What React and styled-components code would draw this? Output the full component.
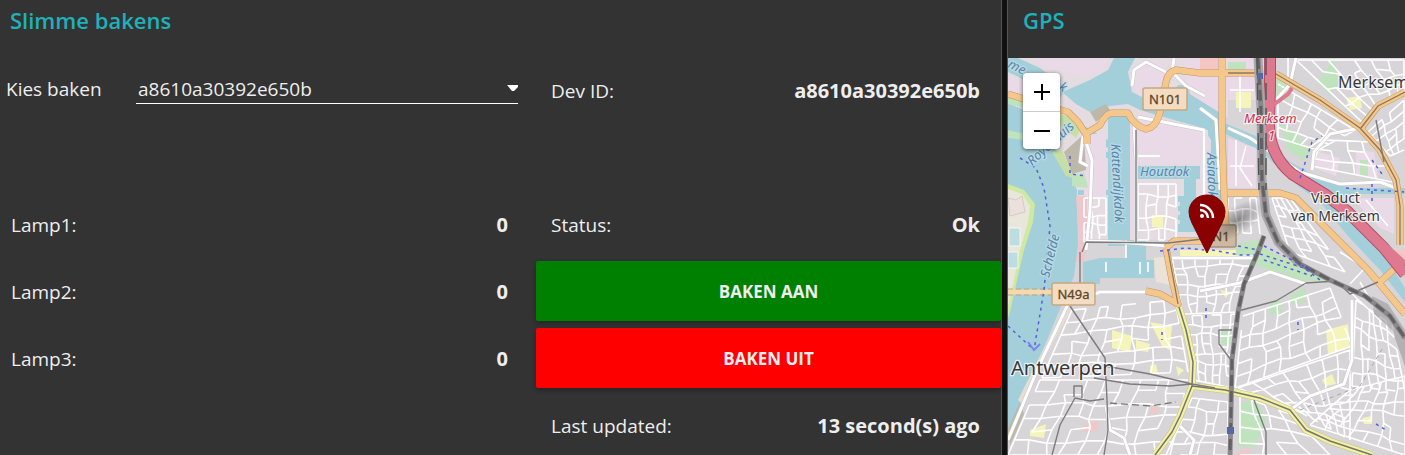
import React from 'react';
import styled, { createGlobalStyle } from 'styled-components';

const GlobalStyle = createGlobalStyle`
  * { box-sizing: border-box; }
  body {
    margin: 0;
    background: #111;
    color: #eee;
    font-family: "Open Sans", "Noto Sans", sans-serif;
    font-size: 19px;
    line-height: 28px;
  }
`;

const Dashboard = styled.main`
  display: grid;
  grid-template-columns: minmax(0, 1002fr) minmax(0, 398fr);
  column-gap: 5px;
  min-height: 100vh;
`;

const Panel = styled.section`
  display: flex;
  flex-direction: column;
  background: #333;
  border: 0 solid #555;
  border-right-width: ${(p) => (p.$side === 'right' ? '1px' : '0')};
  border-left-width: ${(p) => (p.$side === 'left' ? '1px' : '0')};
`;

const PanelTitle = styled.h2`
  margin: 0;
  height: ${(p) => p.$height};
  padding: 6px ${(p) => p.$inset} 0;
  color: #1fb1b9;
  font-size: 22px;
  font-weight: 600;
  line-height: 28px;
`;

const Columns = styled.div`
  display: grid;
  grid-template-columns: minmax(0, 529fr) minmax(0, 465fr);
  grid-auto-rows: 60px;
  gap: 7px;
`;

const Field = styled.div`
  display: flex;
  align-items: center;
  padding: 0 6px 2px;
`;

const FieldLabel = styled.label`
  flex: 0 0 130px;
`;

const SelectBox = styled.div`
  display: flex;
  flex: 1;
  align-items: center;
  margin-right: 5px;
  border-bottom: 1px solid #fff;

  svg {
    flex: none;
    width: 11px;
    margin-left: -11px;
    pointer-events: none;
  }
`;

const Select = styled.select`
  flex: 1;
  min-width: 0;
  height: 29px;
  padding: 0 12px 0 2px;
  border: 0;
  appearance: none;
  background: transparent;
  color: inherit;
  font: inherit;
`;

const Reading = styled.div`
  display: flex;
  align-items: center;
  justify-content: space-between;
  padding: 2px 21px 0 ${(p) => (p.$wide ? '15px' : '11px')};
`;

const Value = styled.strong`
  font-size: 20px;
  font-weight: 700;
`;

const ActionButton = styled.button`
  padding: 2px 6px 0;
  border: 0;
  border-radius: 2px;
  background: ${(p) => p.$color};
  box-shadow: 0 2px 5px rgba(0, 0, 0, 0.3);
  color: #eee;
  font: inherit;
  font-size: 17px;
  font-weight: 700;
  text-transform: uppercase;
`;

const MapView = styled.div`
  position: relative;
  flex: 1;
  min-height: 397px;
  overflow: hidden;
  background: #e0dfdf;
`;

const MapCanvas = styled.svg`
  position: absolute;
  inset: 0;
  width: 100%;
  height: 100%;
  font-family: "Noto Sans", "Open Sans", sans-serif;
`;

const ZoomControl = styled.div`
  position: absolute;
  top: 15px;
  left: 15px;
  display: flex;
  flex-direction: column;
  border-radius: 4px;
  background: #fff;
  box-shadow: 0 1px 4px rgba(0, 0, 0, 0.6);
`;

const ZoomButton = styled.button`
  display: grid;
  place-items: center;
  width: 37px;
  height: 38px;
  padding: 0;
  border: 0;
  background: transparent;
  color: #000;

  & + & {
    border-top: 1px solid #ccc;
  }
`;

/* Streets of a district: lines drawn between the sides of a quadrilateral,
   with slight irregularity so that blocks differ in size. */
const districts = [
  { q: [[1084, 198], [1106, 198], [1106, 242], [1084, 242]], u: 3, v: 5 },
  { q: [[1138, 184], [1176, 184], [1176, 240], [1138, 240]], u: 4, v: 5 },
  { q: [[1072, 310], [1175, 300], [1188, 372], [1042, 378]], u: 8, v: 6 },
  { q: [[1040, 380], [1188, 380], [1170, 455], [1008, 455]], u: 9, v: 6 },
  { q: [[1172, 258], [1256, 256], [1236, 312], [1183, 314]], u: 7, v: 6 },
  { q: [[1184, 316], [1238, 314], [1232, 388], [1194, 380]], u: 6, v: 7 },
  { q: [[1243, 316], [1330, 288], [1352, 346], [1235, 388]], u: 8, v: 6 },
  { q: [[1238, 388], [1350, 350], [1350, 440], [1300, 412]], u: 8, v: 5 },
  { q: [[1356, 300], [1392, 325], [1405, 392], [1352, 386]], u: 6, v: 6 },
  { q: [[1350, 390], [1405, 376], [1405, 455], [1310, 425]], u: 7, v: 6 },
  { q: [[1192, 398], [1228, 402], [1228, 455], [1166, 455]], u: 4, v: 5 },
  { q: [[1240, 396], [1290, 414], [1330, 455], [1240, 455]], u: 4, v: 4 },
  { q: [[1296, 60], [1404, 60], [1404, 92], [1362, 122]], u: 7, v: 4 },
  { q: [[1278, 84], [1355, 130], [1318, 150], [1278, 138]], u: 5, v: 4 },
  { q: [[1368, 132], [1404, 100], [1404, 150], [1390, 156]], u: 3, v: 5 },
  { q: [[1322, 140], [1376, 142], [1392, 182], [1312, 166]], u: 4, v: 3 },
  { q: [[1272, 198], [1290, 198], [1345, 272], [1290, 252]], u: 4, v: 6 },
  { q: [[1228, 198], [1256, 198], [1260, 234], [1228, 232]], u: 4, v: 3 },
];

const wobble = (a, b) => (((a * 37 + b * 61) % 17) - 8) / 38;

function districtPath({ q, u, v }, seed) {
  const at = (s, t) => {
    const x = (1 - t) * ((1 - s) * q[0][0] + s * q[1][0]) + t * ((1 - s) * q[3][0] + s * q[2][0]);
    const y = (1 - t) * ((1 - s) * q[0][1] + s * q[1][1]) + t * ((1 - s) * q[3][1] + s * q[2][1]);
    return `${x.toFixed(1)} ${y.toFixed(1)}`;
  };
  const node = (i, j) => {
    const s = i === 0 || i === u ? i : i + wobble(i + seed, j >> 1);
    const t = j === 0 || j === v ? j : j + wobble(j + seed * 3, i >> 1);
    return at(s / u, t / v);
  };
  let d = '';
  for (let i = 0; i <= u; i += 1) {
    for (let j = 0; j <= v; j += 1) {
      if (j < v && (i * 5 + j * 3 + seed) % 7 !== 0) d += `M${node(i, j)}L${node(i, j + 1)}`;
      if (i < u && (i * 3 + j * 5 + seed) % 6 !== 0) d += `M${node(i, j)}L${node(i + 1, j)}`;
    }
  }
  return d;
}

const water = [
  'M1008 58H1018L1040 68L1066 88L1060 98L1035 85L1008 72Z',
  'M1114 58H1135L1128 72L1132 92L1150 101L1168 98L1178 85L1200 86L1210 96L1222 106V212H1211V140L1203 128L1160 116L1140 110L1128 104L1110 106L1090 112L1076 104L1062 92L1090 80L1108 70Z',
  'M1008 103L1024 110L1040 138L1058 152L1070 174L1077 190L1078 246L1074 276L1062 304L1042 352L1024 398L1008 428Z',
  'M1108 116H1130V246H1108ZM1084 126L1108 140V148L1084 134ZM1078 152H1112V158H1078ZM1078 190H1112V195H1078Z',
  'M1130 166H1220V179H1130ZM1184 179H1196V232H1178V224H1180V220H1178V215H1180V211H1178V206H1180V202H1178V196H1184ZM1196 200H1206V205H1196Z',
  'M1083 262L1100 258H1126V240H1146V260H1154V278H1100V284H1083Z',
  'M1222 122L1256 136L1290 162L1320 178L1350 188L1405 188V194H1350L1340 196L1360 216L1405 288V302L1380 270L1348 236L1322 204L1296 184L1262 152L1222 132Z',
];

const industry = [
  'M1008 76L1036 88L1060 104L1076 120L1070 128L1044 110L1008 92Z',
  'M1030 58H1108L1104 70L1086 76L1050 70Z',
  'M1136 64L1148 62H1166L1168 96L1150 100L1134 90Z',
  'M1138 112L1160 119L1202 129L1204 163H1138Z',
  'M1084 134H1106V196H1084ZM1130 120H1137V238H1130Z',
  'M1182 58H1256V100H1228V118L1190 94Z',
  'M1228 138L1256 148V188H1228ZM1312 150L1340 158L1336 176L1314 168Z',
  'M1356 150L1374 152L1378 178L1356 176ZM1352 198H1394V234L1380 228Z',
  'M1200 130H1208V200H1200Z',
];

const greens = [
  'M1008 92L1030 98L1042 110L1024 108L1008 104Z',
  'M1008 130L1024 134V140L1008 138Z',
  'M1276 78L1292 86L1290 98L1276 104Z',
  'M1318 82L1334 58L1338 84L1330 96Z',
  'M1280 122L1296 134L1310 152L1304 160L1288 150Z',
  'M1236 244L1258 240L1268 250L1312 272L1330 282L1300 280L1258 266L1236 256Z',
  'M1240 404L1256 398L1266 420L1254 448L1238 446Z',
  'M1072 176L1084 172L1088 188L1072 186Z',
  'M1222 330H1232V344H1222ZM1290 294L1306 288V302L1292 304Z',
  'M1360 160H1368V176H1360ZM1228 62H1246V70H1228ZM1270 301H1282V314H1270Z',
];

const yellows = [
  'M1112 330L1132 336L1130 352L1112 348ZM1136 340L1150 344L1148 352L1136 350Z',
  'M1150 322L1172 326L1170 350L1162 346Z',
  'M1326 330L1348 324L1350 348L1328 354Z',
  'M1152 215H1163V227H1152ZM1236 92H1251V108H1236Z',
  'M1346 98L1360 96L1362 108L1350 110ZM1322 380L1332 374L1336 384L1326 386Z',
  'M1180 250H1236V257H1180Z',
  'M1030 430L1046 424L1044 438L1030 436Z',
  'M1150 366L1156 364L1158 374L1150 374ZM1176 366L1184 370L1178 376Z',
  'M1220 290L1230 292L1226 298ZM1362 418L1372 416V424H1364Z',
];

const orangeRoads = [
  'M1008 94L1040 104L1068 112L1078 122L1087 136V144M1087 133L1100 125Q1106 113 1112 113H1128Q1134 126 1146 129Q1156 128 1160 112L1166 82Q1168 72 1176 70L1200 73H1256',
  'M1222 58V130L1224 195L1227 240',
  'M1276 74L1320 100L1360 128L1380 150L1396 180L1400 206V245M1361 128L1378 106L1405 92',
  'M1228 193H1280L1296 198L1322 224L1368 270L1405 314',
  'M1380 282L1400 264',
  'M1166 248L1174 241H1227M1166 248L1172 280L1178 304L1160 294L1146 291',
];

const yellowRoads = [
  'M1178 304L1186 330L1193 362L1192 386L1180 416L1172 432L1155 455',
  'M1192 386L1225 390L1260 398L1290 410L1306 430L1330 441L1372 455',
];

const whiteRoads = [
  'M1086 142L1092 160L1090 210L1086 250M1134 124L1136 160V242M1086 241L1120 242L1168 246',
  'M1068 304L1038 368L1008 440M1068 304L1100 292L1145 292',
  'M1200 291L1240 283L1270 272L1306 284M1172 258H1256M1352 300V360L1344 384L1310 396L1290 410',
  'M1138 156H1160M1138 117L1204 130V200M1084 128L1080 162L1088 166',
  'M1228 128L1250 138L1300 172L1340 184L1380 182L1396 188M1312 170L1314 152L1330 134L1360 128',
  'M1132 86L1134 70L1146 62L1166 72M1174 58L1172 72L1186 86L1205 96',
  'M1296 58L1290 84L1276 100M1200 108L1216 120L1220 190',
  'M1106 406L1110 430L1124 438L1130 455M1180 426L1194 440L1190 455',
];

const rails = [
  'M1258 58L1261 110L1262 180L1266 215L1278 242L1300 264L1330 280L1365 296L1390 316L1405 338',
  'M1264 236L1258 252L1244 284L1238 312L1232 360L1230 455',
];

const thinTracks = [
  'M1082 252L1086 242L1168 243L1228 236M1136 130V242M1070 306L1105 358L1107 400L1108 430L1104 455M1052 455L1060 425L1075 398L1090 401L1104 399',
  'M1094 378L1130 384L1170 386L1192 384L1215 388M1105 366L1150 374L1192 384M1074 397V386L1082 386V398',
  'M1238 311L1276 301L1306 283L1336 281L1350 294L1378 282M1231 360L1219 344V330H1232M1254 400L1266 432V455M1376 120L1384 162M1080 252V290',
];

const ferry = [
  'M1020 158L1036 168L1044 188L1050 226L1044 290L1034 350M1008 326L1034 350',
  'M1070 156V174L1086 176M1300 178L1312 142L1322 136M1346 188L1404 192M1372 184V204',
  'M1160 251L1186 248L1204 250M1212 250L1240 255H1256M1238 246L1258 250M1260 254L1304 268L1320 280M1264 246L1312 270M1264 260L1312 276M1372 160L1382 174M1206 308V320M1298 322V330M1376 424L1386 430M1162 332V340',
];

const Lines = ({ paths, ...style }) => (
  <g fill="none" strokeLinejoin="round" {...style}>
    {paths.map((d) => <path key={d} d={d} />)}
  </g>
);

const Areas = ({ paths, fill }) => <path d={paths.join('')} fill={fill} />;

const Shield = ({ x, y, width, faded, children }) => (
  <g>
    <rect x={x} y={y} width={width} height="22" rx="2" fill={faded ? '#cdb8a2' : '#f3dcc2'} stroke={faded ? '#a89079' : '#c9a783'} strokeWidth="1.5" />
    <text x={x + width / 2} y={y + 16} fontSize="13" textAnchor="middle" fill="#5e4628" stroke="#5e4628" strokeWidth="0.3">
      {children}
    </text>
  </g>
);

const Place = ({ x, y, size = 14, color = '#383838', turn, italic, halo = '#fff', children }) => (
  <text
    x={x}
    y={y}
    fontSize={size}
    fill={color}
    fontStyle={italic ? 'italic' : 'normal'}
    stroke={halo}
    strokeOpacity="0.75"
    strokeWidth="2.5"
    strokeLinejoin="round"
    paintOrder="stroke"
    transform={turn ? `rotate(${turn} ${x} ${y})` : undefined}
  >
    {children}
  </text>
);

const WaterName = (props) => <Place size={13} color="#5685ad" halo="#c3e0e8" italic {...props} />;

function CityMap() {
  return (
    <MapCanvas viewBox="1008 58 397 397" preserveAspectRatio="xMinYMin slice" role="img" aria-label="Antwerpen">
      <defs>
        <radialGradient id="pinShade">
          <stop offset="0" stopColor="#222" stopOpacity="0.45" />
          <stop offset="1" stopColor="#222" stopOpacity="0" />
        </radialGradient>
      </defs>
      <rect x="1008" y="58" width="397" height="397" fill="#d7d5d7" />
      <path d="M1008 58H1222V240H1084L1050 160L1008 110Z" fill="#e4dce0" />
      <Areas paths={water} fill="#a3cfdb" />
      <Areas paths={industry} fill="#ead9e6" />
      <path d="M1008 184L1024 190L1035 204L1033 222L1024 250L1017 280L1010 312L1008 318Z" fill="#cfeaa0" />
      <path d="M1008 189L1022 194L1030 206L1028 222L1020 250L1014 280L1008 306Z" fill="#e9e7dc" />
      <path d="M1009 228H1020V246H1009ZM1008 252H1018V268H1008Z" fill="#bcdde2" stroke="#fff" strokeWidth="0.7" />
      <path d="M1008 198L1016 200L1022 196L1025 212L1010 216Z" fill="#ece0dd" stroke="#c9bfbc" strokeWidth="0.7" />
      <path d="M1076 196H1087V246L1084 262H1076L1079 240Z" fill="#efc7ca" />
      <path d="M1064 152L1084 134L1086 170L1072 174ZM1090 112L1106 104L1110 110L1096 122ZM1008 428L1020 402L1024 414L1010 446Z" fill="#bdb9aa" />
      <path d="M1044 112L1068 116L1080 130L1076 138ZM1052 152L1062 150L1074 178L1066 176Z" fill="#c6dfa6" />
      <path d="M1066 306L1072 308L1034 378L1022 404L1018 400L1042 352Z" fill="#e6ddd4" />
      <path d="M1200 58H1218V72H1200ZM1384 250H1405V266Z" fill="#f5c6c4" />
      <path d="M1154 258L1168 256L1176 286L1156 282Z" fill="#ece3d8" />
      <Areas paths={greens} fill="#bfe3bd" />
      <Areas paths={yellows} fill="#f5f4ba" />
      <path d="M1082 426L1098 420L1096 432L1084 432ZM1152 406L1158 408L1156 416L1150 412ZM1236 452L1250 448V455H1236Z" fill="#f0c8c8" />
      <g fill="none" stroke="#fff" strokeWidth="1.6">
        {districts.map((district, i) => <path key={i} d={districtPath(district, i + 1)} />)}
        <path d="M1106 262V272M1126 240V258M1140 262V274M1148 262V272" />
        <path d="M1236 140V186M1246 146L1240 168L1252 186M1230 166H1254M1288 58V82M1240 76V112M1230 90H1254M1366 200L1388 226M1340 252L1365 268L1350 284M1348 290L1382 322M1360 282L1376 310" />
      </g>
      <Lines paths={whiteRoads} stroke="#c9c6c8" strokeWidth="4" />
      <Lines paths={whiteRoads} stroke="#fff" strokeWidth="3" />
      <path d="M1008 292H1060" stroke="#f4d9ae" strokeWidth="5" />
      <path d="M1008 289H1060M1008 295H1060" stroke="#c4a274" strokeDasharray="5 3" />
      <Lines paths={yellowRoads} stroke="#c5c383" strokeWidth="7" />
      <Lines paths={yellowRoads} stroke="#f2f1a5" strokeWidth="6" />
      <Lines paths={yellowRoads} stroke="#77756b" strokeWidth="1.5" />
      <Lines paths={orangeRoads} stroke="#bd9568" strokeWidth="7" />
      <Lines paths={orangeRoads} stroke="#f6c78a" strokeWidth="6" />
      <path d="M1276 74L1320 100L1360 128L1380 150L1396 180L1400 206V245M1361 128L1378 106L1405 92M1168 250L1178 304M1228 73H1256" fill="none" stroke="#8c7961" strokeWidth="1.3" />
      <path d="M1270 58V88L1269 120Q1268 154 1292 174L1326 195L1348 212L1384 248L1405 274" fill="none" stroke="#b24e68" strokeWidth="12" />
      <path d="M1372 234L1405 264" fill="none" stroke="#df7990" strokeWidth="6" />
      <path d="M1272 106L1288 94L1292 88" fill="none" stroke="#df7990" strokeWidth="4" />
      <path d="M1270 58V88L1269 120Q1268 154 1292 174L1326 195L1348 212L1384 248L1405 274" fill="none" stroke="#df7990" strokeWidth="10" />
      <path d="M1372 296L1388 304L1405 330V366L1392 330L1374 314Z" fill="#9b9a9b" opacity="0.6" />
      <Lines paths={thinTracks} stroke="#7d7b7d" strokeWidth="1.4" />
      <path d="M1110 403L1150 406L1176 402" fill="none" stroke="#777" strokeWidth="1.3" strokeDasharray="7 4" />
      <path d="M1300 410L1360 386L1384 346" fill="none" stroke="#aaa" strokeDasharray="4 4" />
      <path d="M1258 58L1261 110L1262 180L1266 215L1278 242L1300 264" fill="none" stroke="#aaa8aa" strokeWidth="9" />
      <Lines paths={rails} stroke="#8a888a" strokeWidth="5" />
      <Lines paths={rails} stroke="#626162" strokeWidth="3" strokeDasharray="11 5" />
      <path d="M1257 58L1259 190M1266 58L1266 190" stroke="#555" strokeWidth="1.5" strokeDasharray="17 8" />
      <path d="M1257 73H1263V79H1257ZM1227 427H1234V434H1227Z" fill="#5269a5" />
      <Lines paths={ferry} stroke="#545edc" strokeWidth="1.5" strokeDasharray="3 4" />
      <path d="M1028 342L1034 350L1040 344" fill="none" stroke="#7b86e8" strokeWidth="2" />

      <Place x={1338} y={88} size={16}>Merksem</Place>
      <Place x={1244} y={123} size={13} color="#cc2f4b" italic>Merksem</Place>
      <Place x={1268} y={140} size={13} color="#cc2f4b" italic>1</Place>
      <Place x={1311} y={203}>Viaduct</Place>
      <Place x={1291} y={221}>van Merksem</Place>
      <Place x={1011} y={375} size={20}>Antwerpen</Place>
      <WaterName x={1140} y={176}>Houtdok</WaterName>
      <WaterName x={1111} y={144} turn={87}>Kattendijkdok</WaterName>
      <WaterName x={1207} y={153} turn={88}>Asiadok</WaterName>
      <WaterName x={1032} y={166} turn={-42}>Royersluis</WaterName>
      <WaterName x={1049} y={278} turn={-76}>Schelde</WaterName>
      <WaterName x={1007} y={67} turn={26}>me</WaterName>
      <WaterName x={1058} y={89} turn={32}>k</WaterName>

      <Shield x={1143} y={88} width={44}>N101</Shield>
      <Shield x={1052} y={283} width={43}>N49a</Shield>
      <Shield x={1206} y={225} width={30} faded>N1</Shield>

      <ellipse cx="1238" cy="220" rx="30" ry="14" transform="rotate(-35 1238 220)" fill="url(#pinShade)" />
      <path d="M1207 253L1192 223Q1189 217 1189 212A18 17 0 0 1 1225 212Q1225 217 1222 223Z" fill="#8b0000" stroke="#7a0000" />
      <circle cx="1202" cy="216" r="2" fill="#fff" />
      <path d="M1200 210A8 8 0 0 1 1208 218M1200 205A13 13 0 0 1 1213 218" fill="none" stroke="#fff" strokeWidth="2.5" />
    </MapCanvas>
  );
}

function DataReading({ label, value, wide }) {
  return (
    <Reading $wide={wide}>
      <span>{label}</span>
      <Value>{value}</Value>
    </Reading>
  );
}

export default function App() {
  return (
    <>
      <GlobalStyle />
      <Dashboard>
        <Panel $side="right">
          <PanelTitle $height="60px" $inset="10px">Slimme bakens</PanelTitle>
          <Columns>
            <Field>
              <FieldLabel htmlFor="beacon">Kies baken</FieldLabel>
              <SelectBox>
                <Select id="beacon" defaultValue="a8610a30392e650b">
                  <option>a8610a30392e650b</option>
                </Select>
                <svg viewBox="0 0 11 7" aria-hidden="true">
                  <path d="M0 0H11V2L7 6H5Z" fill="#fff" />
                </svg>
              </SelectBox>
            </Field>
            <DataReading label="Dev ID:" value="a8610a30392e650b" wide />
            <span />
            <span />
            <DataReading label="Lamp1:" value="0" />
            <DataReading label="Status:" value="Ok" wide />
            <DataReading label="Lamp2:" value="0" />
            <ActionButton type="button" $color="#008000">Baken aan</ActionButton>
            <DataReading label="Lamp3:" value="0" />
            <ActionButton type="button" $color="#ff0000">Baken uit</ActionButton>
            <span />
            <DataReading label="Last updated:" value="13 second(s) ago" wide />
          </Columns>
        </Panel>
        <Panel $side="left">
          <PanelTitle $height="58px" $inset="15px">GPS</PanelTitle>
          <MapView>
            <CityMap />
            <ZoomControl>
              <ZoomButton type="button" aria-label="Zoom in">
                <svg width="16" height="16" viewBox="0 0 16 16"><path d="M0 8H16M8 0V16" stroke="#000" strokeWidth="2" /></svg>
              </ZoomButton>
              <ZoomButton type="button" aria-label="Zoom out">
                <svg width="16" height="16" viewBox="0 0 16 16"><path d="M0 8H16" stroke="#000" strokeWidth="2" /></svg>
              </ZoomButton>
            </ZoomControl>
          </MapView>
        </Panel>
      </Dashboard>
    </>
  );
}
